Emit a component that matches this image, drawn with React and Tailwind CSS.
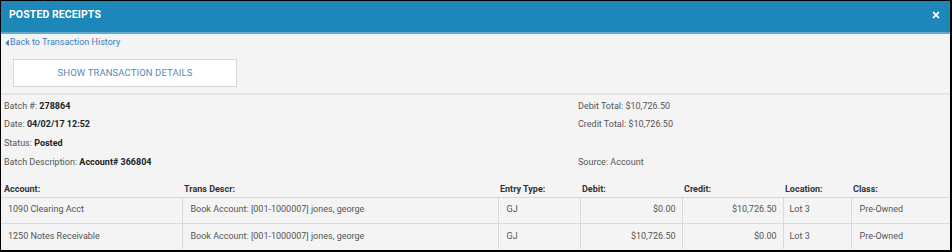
import React from 'react';
import { FaTimes, FaCaretLeft } from 'react-icons/fa';

const info = [
  { label: 'Batch #:', value: '278864', right: 'Debit Total: $10,726.50' },
  { label: 'Date:', value: '04/02/17 12:52', right: 'Credit Total: $10,726.50' },
  { label: 'Status:', value: 'Posted', right: '' },
  { label: 'Batch Description:', value: 'Account# 366804', right: 'Source: Account' },
];

const rows = [
  { account: '1090 Clearing Acct', descr: 'Book Account: [001-1000007] jones, george', type: 'GJ', debit: '$0.00', credit: '$10,726.50', location: 'Lot 3', cls: 'Pre-Owned' },
  { account: '1250 Notes Receivable', descr: 'Book Account: [001-1000007] jones, george', type: 'GJ', debit: '$10,726.50', credit: '$0.00', location: 'Lot 3', cls: 'Pre-Owned' },
];

const headers = ['Account:', 'Trans Descr:', 'Entry Type:', 'Debit:', 'Credit:', 'Location:', 'Class:'];
const widths = ['w-[181px]', 'w-[316px]', 'w-[82px]', 'w-[102px]', 'w-[101px]', 'w-[68px]', 'w-[99px]'];

export default function App() {
  return (
    <div className="w-[952px] h-[252px] overflow-hidden border-t border-l border-r-2 border-b-2 border-black bg-[#f4f4f4] font-['Roboto',sans-serif] text-[9px] text-[#555]">
      {/* title bar */}
      <div className="h-[33px] bg-[#1c87b8] border-b-2 border-[#5eaad0] flex items-start justify-between pl-[8px] pr-[9px] pt-[7px]">
        <h1 className="text-white font-bold text-[10.5px] leading-[14px] tracking-[0.1px]">POSTED RECEIPTS</h1>
        <FaTimes className="text-white w-[10px] h-[10px] mt-[2px]" />
      </div>

      {/* back link */}
      <a className="flex items-center h-[16px] mt-[1px] pl-[2px] text-[#3a7ec0] text-[9px] cursor-pointer">
        <FaCaretLeft className="w-[8px] h-[10px] -mr-[1px]" />
        <span>Back to Transaction History</span>
      </a>

      {/* button */}
      <div className="pl-[12px] pt-[8px] pb-[6px] border-b-2 border-[#e4e4e4]">
        <button className="w-[224px] h-[28px] bg-white border border-[#d8d8d8] text-[#5a88b6] text-[9.5px] tracking-[0.1px]">
          SHOW TRANSACTION DETAILS
        </button>
      </div>

      {/* batch info */}
      <div className="pt-[2px] h-[85px]">
        {info.map((r) => (
          <div key={r.label} className="flex h-[18.7px] items-center">
            <div className="w-[577px] pl-[3px]">
              {r.label} <span className="font-bold text-[#222]">{r.value}</span>
            </div>
            <div>{r.right}</div>
          </div>
        ))}
      </div>

      {/* lines */}
      <table className="table-fixed border-collapse w-[949px]">
        <colgroup>
          {widths.map((w, i) => (
            <col key={i} className={w} />
          ))}
        </colgroup>
        <thead>
          <tr className="h-[17px]">
            {headers.map((h, i) => (
              <th key={h} className={`text-left align-bottom font-bold text-[#333] p-0 ${i === 0 ? 'pl-[3px]' : 'pl-[2px]'}`}>
                {h}
              </th>
            ))}
          </tr>
        </thead>
        <tbody>
          {rows.map((r) => (
            <tr key={r.account} className="h-[26px] border-t border-[#dadada]">
              <td className="pl-[7px]">{r.account}</td>
              <td className="pl-[8px] border-l border-[#dadada]">{r.descr}</td>
              <td className="pl-[8px] border-l border-[#dadada]">{r.type}</td>
              <td className="pr-[6px] text-right border-l border-[#dadada]">{r.debit}</td>
              <td className="pr-[6px] text-right border-l border-[#dadada]">{r.credit}</td>
              <td className="pl-[6px] border-l border-[#dadada]">{r.location}</td>
              <td className="pl-[8px] border-l border-[#dadada]">{r.cls}</td>
            </tr>
          ))}
        </tbody>
      </table>
    </div>
  );
}
